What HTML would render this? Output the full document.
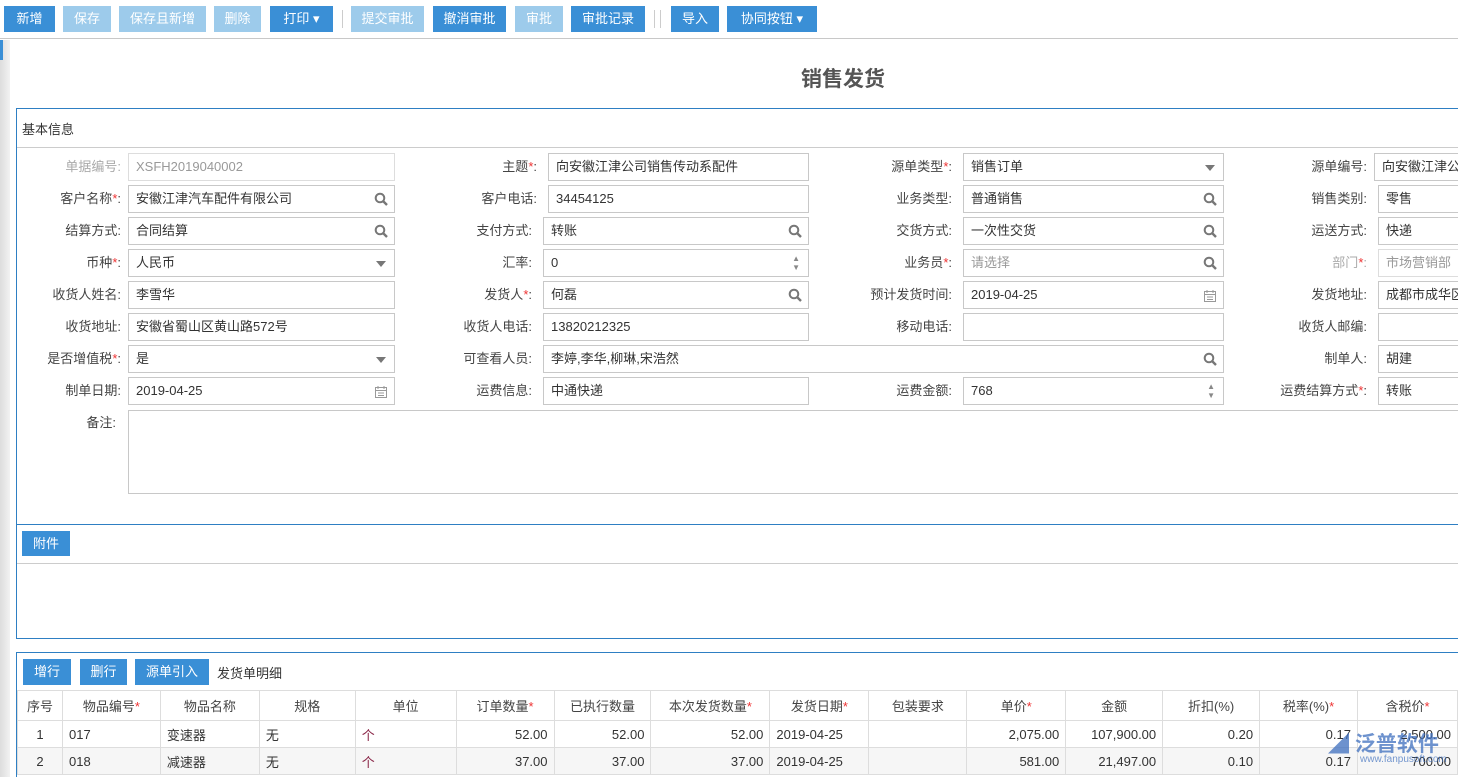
<!DOCTYPE html>
<html><head><meta charset="utf-8"><style>
*{box-sizing:border-box;margin:0;padding:0}
html,body{width:1458px;height:777px;overflow:hidden}
body{background:#fff;font-family:"Liberation Sans","Noto Sans CJK SC",sans-serif;font-size:13px;color:#333;position:relative}
.a{position:absolute}
.btn{position:absolute;height:26px;line-height:26px;color:#fff;background:#3a8fd6;text-align:center;font-size:13px}
.dis{background:#9dcbeb}
.sep{position:absolute;top:10px;width:1px;height:18px;background:#ccc}
.lb{position:absolute;text-align:right;height:28px;line-height:28px;color:#444;white-space:nowrap}
.lb i{color:#e33;font-style:normal}
.lb.g{color:#aaa}
.in{position:absolute;height:28px;line-height:26px;border:1px solid #c8c8c8;padding-left:7px;color:#333;white-space:nowrap;overflow:hidden;background:#fff}
.in.g{color:#999}
.ic{position:absolute;right:6px;top:6px;width:14px;height:14px}
.dd{position:absolute;right:8px;top:11px;width:0;height:0;border-left:5px solid transparent;border-right:5px solid transparent;border-top:6px solid #777}
.sp{position:absolute;right:8px;top:4px;font-size:8px;line-height:9px;color:#888}
table{border-collapse:collapse;position:absolute;left:17px;top:690px;table-layout:fixed}
td{border:1px solid #ddd;height:27px;padding:0 6px;white-space:nowrap;overflow:hidden}
tr.h td{height:30px;text-align:center;color:#444}
.r{text-align:right}
td i{color:#e33;font-style:normal}
</style></head><body>
<div class="a" style="left:0;top:40px;width:10px;height:737px;background:linear-gradient(to right,#ddd,#f2f2f2)"></div>
<div class="a" style="left:0;top:40px;width:3px;height:20px;background:#3a8fd6"></div>
<div class="a" style="left:0;top:38px;width:1458px;height:1px;background:#c8c8c8"></div>
<div class="btn" style="left:4px;top:6px;width:51px">新增</div>
<div class="btn dis" style="left:63px;top:6px;width:48px">保存</div>
<div class="btn dis" style="left:119px;top:6px;width:87px">保存且新增</div>
<div class="btn dis" style="left:214px;top:6px;width:47px">删除</div>
<div class="btn" style="left:270px;top:6px;width:63px">打印 ▾</div>
<div class="sep" style="left:342px"></div>
<div class="btn dis" style="left:351px;top:6px;width:73px">提交审批</div>
<div class="btn" style="left:433px;top:6px;width:73px">撤消审批</div>
<div class="btn dis" style="left:515px;top:6px;width:48px">审批</div>
<div class="btn" style="left:571px;top:6px;width:74px">审批记录</div>
<div class="sep" style="left:654px"></div><div class="sep" style="left:660px"></div>
<div class="btn" style="left:671px;top:6px;width:48px">导入</div>
<div class="btn" style="left:727px;top:6px;width:90px">协同按钮 ▾</div>

<div class="a" style="left:0;top:63px;width:1686px;text-align:center;font-size:21px;font-weight:bold;color:#555">销售发货</div>

<div class="a" style="left:16px;top:108px;width:1450px;height:531px;border:1px solid #2e7fc3;border-right:none"></div>
<div class="a" style="left:22px;top:119px;color:#333">基本信息</div>
<div class="a" style="left:17px;top:147px;width:1441px;height:1px;background:#ccc"></div>
<div class="a" style="left:17px;top:524px;width:1441px;height:1px;background:#2e7fc3"></div>
<div class="btn" style="left:22px;top:531px;width:48px;height:25px;line-height:25px">附件</div>
<div class="a" style="left:17px;top:563px;width:1441px;height:1px;background:#ccc"></div>

<div class="lb g" style="left:20px;top:153px;width:101px">单据编号:</div>
<div class="in g" style="left:128px;top:153px;width:267px;border-color:#ddd">XSFH2019040002</div>
<div class="lb" style="left:400px;top:153px;width:137px">主题<i>*</i>:</div>
<div class="in" style="left:548px;top:153px;width:261px">向安徽江津公司销售传动系配件</div>
<div class="lb" style="left:820px;top:153px;width:132px">源单类型<i>*</i>:</div>
<div class="in" style="left:963px;top:153px;width:261px">销售订单<span class="dd"></span></div>
<div class="lb" style="left:1240px;top:153px;width:127px">源单编号:</div>
<div class="in" style="left:1374px;top:153px;width:100px">向安徽江津公司</div>

<div class="lb" style="left:20px;top:185px;width:101px">客户名称<i>*</i>:</div>
<div class="in" style="left:128px;top:185px;width:267px">安徽江津汽车配件有限公司<svg class="ic" viewBox="0 0 14 14"><circle cx="6" cy="6" r="4.3" fill="none" stroke="#777" stroke-width="2"/><path d="M9 9l4 4" stroke="#777" stroke-width="2.4"/></svg></div>
<div class="lb" style="left:400px;top:185px;width:137px">客户电话:</div>
<div class="in" style="left:548px;top:185px;width:261px">34454125</div>
<div class="lb" style="left:820px;top:185px;width:132px">业务类型:</div>
<div class="in" style="left:963px;top:185px;width:261px">普通销售<svg class="ic" viewBox="0 0 14 14"><circle cx="6" cy="6" r="4.3" fill="none" stroke="#777" stroke-width="2"/><path d="M9 9l4 4" stroke="#777" stroke-width="2.4"/></svg></div>
<div class="lb" style="left:1240px;top:185px;width:127px">销售类别:</div>
<div class="in" style="left:1378px;top:185px;width:100px">零售</div>

<div class="lb" style="left:20px;top:217px;width:101px">结算方式:</div>
<div class="in" style="left:128px;top:217px;width:267px">合同结算<svg class="ic" viewBox="0 0 14 14"><circle cx="6" cy="6" r="4.3" fill="none" stroke="#777" stroke-width="2"/><path d="M9 9l4 4" stroke="#777" stroke-width="2.4"/></svg></div>
<div class="lb" style="left:400px;top:217px;width:132px">支付方式:</div>
<div class="in" style="left:543px;top:217px;width:266px">转账<svg class="ic" viewBox="0 0 14 14"><circle cx="6" cy="6" r="4.3" fill="none" stroke="#777" stroke-width="2"/><path d="M9 9l4 4" stroke="#777" stroke-width="2.4"/></svg></div>
<div class="lb" style="left:820px;top:217px;width:132px">交货方式:</div>
<div class="in" style="left:963px;top:217px;width:261px">一次性交货<svg class="ic" viewBox="0 0 14 14"><circle cx="6" cy="6" r="4.3" fill="none" stroke="#777" stroke-width="2"/><path d="M9 9l4 4" stroke="#777" stroke-width="2.4"/></svg></div>
<div class="lb" style="left:1240px;top:217px;width:127px">运送方式:</div>
<div class="in" style="left:1378px;top:217px;width:100px">快递</div>

<div class="lb" style="left:20px;top:249px;width:101px">币种<i>*</i>:</div>
<div class="in" style="left:128px;top:249px;width:267px">人民币<span class="dd"></span></div>
<div class="lb" style="left:400px;top:249px;width:132px">汇率:</div>
<div class="in" style="left:543px;top:249px;width:266px">0<span class="sp">▲<br>▼</span></div>
<div class="lb" style="left:820px;top:249px;width:132px">业务员<i>*</i>:</div>
<div class="in g" style="left:963px;top:249px;width:261px">请选择<svg class="ic" viewBox="0 0 14 14"><circle cx="6" cy="6" r="4.3" fill="none" stroke="#777" stroke-width="2"/><path d="M9 9l4 4" stroke="#777" stroke-width="2.4"/></svg></div>
<div class="lb g" style="left:1240px;top:249px;width:127px">部门<i>*</i>:</div>
<div class="in g" style="left:1378px;top:249px;width:100px;border-color:#ddd">市场营销部</div>

<div class="lb" style="left:20px;top:281px;width:101px">收货人姓名:</div>
<div class="in" style="left:128px;top:281px;width:267px">李雪华</div>
<div class="lb" style="left:400px;top:281px;width:132px">发货人<i>*</i>:</div>
<div class="in" style="left:543px;top:281px;width:266px">何磊<svg class="ic" viewBox="0 0 14 14"><circle cx="6" cy="6" r="4.3" fill="none" stroke="#777" stroke-width="2"/><path d="M9 9l4 4" stroke="#777" stroke-width="2.4"/></svg></div>
<div class="lb" style="left:820px;top:281px;width:132px">预计发货时间:</div>
<div class="in" style="left:963px;top:281px;width:261px">2019-04-25<svg class="ic" viewBox="0 0 14 14" style="top:7px"><rect x="1.5" y="2.5" width="11" height="10" fill="none" stroke="#999"/><path d="M1.5 5.5h11M4 1v3M10 1v3M4 8h6M4 10.5h6" stroke="#999"/></svg></div>
<div class="lb" style="left:1240px;top:281px;width:127px">发货地址:</div>
<div class="in" style="left:1378px;top:281px;width:100px">成都市成华区</div>

<div class="lb" style="left:20px;top:313px;width:101px">收货地址:</div>
<div class="in" style="left:128px;top:313px;width:267px">安徽省蜀山区黄山路572号</div>
<div class="lb" style="left:400px;top:313px;width:132px">收货人电话:</div>
<div class="in" style="left:543px;top:313px;width:266px">13820212325</div>
<div class="lb" style="left:820px;top:313px;width:132px">移动电话:</div>
<div class="in" style="left:963px;top:313px;width:261px"></div>
<div class="lb" style="left:1240px;top:313px;width:127px">收货人邮编:</div>
<div class="in" style="left:1378px;top:313px;width:100px"></div>

<div class="lb" style="left:20px;top:345px;width:101px">是否增值税<i>*</i>:</div>
<div class="in" style="left:128px;top:345px;width:267px">是<span class="dd"></span></div>
<div class="lb" style="left:400px;top:345px;width:132px">可查看人员:</div>
<div class="in" style="left:543px;top:345px;width:681px">李婷,李华,柳琳,宋浩然<svg class="ic" viewBox="0 0 14 14"><circle cx="6" cy="6" r="4.3" fill="none" stroke="#777" stroke-width="2"/><path d="M9 9l4 4" stroke="#777" stroke-width="2.4"/></svg></div>
<div class="lb" style="left:1240px;top:345px;width:127px">制单人:</div>
<div class="in" style="left:1378px;top:345px;width:100px">胡建</div>

<div class="lb" style="left:20px;top:377px;width:101px">制单日期:</div>
<div class="in" style="left:128px;top:377px;width:267px">2019-04-25<svg class="ic" viewBox="0 0 14 14" style="top:7px"><rect x="1.5" y="2.5" width="11" height="10" fill="none" stroke="#999"/><path d="M1.5 5.5h11M4 1v3M10 1v3M4 8h6M4 10.5h6" stroke="#999"/></svg></div>
<div class="lb" style="left:400px;top:377px;width:132px">运费信息:</div>
<div class="in" style="left:543px;top:377px;width:266px">中通快递</div>
<div class="lb" style="left:820px;top:377px;width:132px">运费金额:</div>
<div class="in" style="left:963px;top:377px;width:261px">768<span class="sp">▲<br>▼</span></div>
<div class="lb" style="left:1240px;top:377px;width:127px">运费结算方式<i>*</i>:</div>
<div class="in" style="left:1378px;top:377px;width:100px">转账</div>

<div class="lb" style="left:20px;top:409px;width:96px">备注:</div>
<div class="in" style="left:128px;top:410px;width:1340px;height:84px"></div>

<div class="a" style="left:16px;top:652px;width:1450px;height:130px;border:1px solid #2e7fc3;border-right:none"></div>
<div class="btn" style="left:23px;top:659px;width:48px">增行</div>
<div class="btn" style="left:80px;top:659px;width:47px">删行</div>
<div class="btn" style="left:135px;top:659px;width:74px">源单引入</div>
<div class="a" style="left:217px;top:663px">发货单明细</div>
<table>
<colgroup><col style="width:45px"><col style="width:98px"><col style="width:99px"><col style="width:96px"><col style="width:101px"><col style="width:98px"><col style="width:97px"><col style="width:119px"><col style="width:99px"><col style="width:98px"><col style="width:99px"><col style="width:97px"><col style="width:97px"><col style="width:98px"><col style="width:100px"></colgroup>
<tr class="h"><td>序号</td><td>物品编号<i>*</i></td><td>物品名称</td><td>规格</td><td>单位</td><td>订单数量<i>*</i></td><td>已执行数量</td><td>本次发货数量<i>*</i></td><td>发货日期<i>*</i></td><td>包装要求</td><td>单价<i>*</i></td><td>金额</td><td>折扣(%)</td><td>税率(%)<i>*</i></td><td>含税价<i>*</i></td></tr>
<tr><td style="text-align:center">1</td><td>017</td><td>变速器</td><td>无</td><td style="color:#824">个</td><td class="r">52.00</td><td class="r">52.00</td><td class="r">52.00</td><td>2019-04-25</td><td></td><td class="r">2,075.00</td><td class="r">107,900.00</td><td class="r">0.20</td><td class="r">0.17</td><td class="r">2,500.00</td></tr>
<tr style="background:#f6f6f6"><td style="text-align:center">2</td><td>018</td><td>减速器</td><td>无</td><td style="color:#824">个</td><td class="r">37.00</td><td class="r">37.00</td><td class="r">37.00</td><td>2019-04-25</td><td></td><td class="r">581.00</td><td class="r">21,497.00</td><td class="r">0.10</td><td class="r">0.17</td><td class="r">700.00</td></tr>
</table>
<div class="a" style="left:1328px;top:728px;font-size:21px;font-weight:bold;color:rgba(60,110,190,0.75)">◢ 泛普软件</div>
<div class="a" style="left:1360px;top:754px;font-size:10px;color:rgba(60,110,190,0.7)">www.fanpusoft.com</div>
</body></html>
